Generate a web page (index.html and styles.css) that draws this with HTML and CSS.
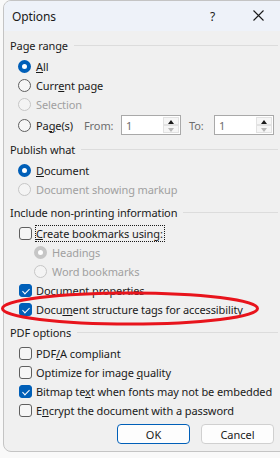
FILE: index.html
```html
<!DOCTYPE html>
<html lang="en">
<head>
    <meta charset="UTF-8">
    <title>Options</title>
    <link rel="stylesheet" href="styles.css">
</head>
<body>
    <div class="screen">
        <div class="window">
            <div class="titlebar">
                <span class="title">Options</span>
                <span class="help">?</span>
                <span class="close">
                    <svg width="11" height="11" viewBox="0 0 11 11"><path d="M0.5 0.5 L10.5 10.5 M10.5 0.5 L0.5 10.5" stroke="#1a1a1a" stroke-width="1.1" fill="none"/></svg>
                </span>
            </div>

            <div class="content">
                <div class="group">
                    <div class="group-label"><span>Page range</span></div>
                    <div class="row"><span class="radio on"></span><span><u>A</u>ll</span></div>
                    <div class="row"><span class="radio"></span><span>Curr<u>e</u>nt page</span></div>
                    <div class="row disabled"><span class="radio"></span><span>Selection</span></div>
                    <div class="row pages">
                        <span class="radio"></span><span class="pages-text">Pa<u>g</u>e(s)</span>
                        <span class="field-label from">From:</span>
                        <span class="spin"><span class="spin-value">1</span><span class="spin-btns"><span class="up"></span><span class="down"></span></span></span>
                        <span class="field-label to">To:</span>
                        <span class="spin"><span class="spin-value">1</span><span class="spin-btns"><span class="up"></span><span class="down"></span></span></span>
                    </div>
                </div>

                <div class="group">
                    <div class="group-label"><span>Publish what</span></div>
                    <div class="row"><span class="radio on"></span><span><u>D</u>ocument</span></div>
                    <div class="row disabled"><span class="radio"></span><span>Document showing markup</span></div>
                </div>

                <div class="group">
                    <div class="group-label"><span>Include non-printing information</span></div>
                    <div class="row"><span class="check"></span><span class="focus"><u>C</u>reate bookmarks using:</span></div>
                    <div class="row sub disabled"><span class="radio on"></span><span>Headings</span></div>
                    <div class="row sub disabled"><span class="radio"></span><span>Word bookmarks</span></div>
                    <div class="row"><span class="check on"></span><span>Document properties</span></div>
                    <div class="row"><span class="check on"></span><span>Docu<u>m</u>ent structure tags for accessibility</span></div>
                </div>

                <div class="group">
                    <div class="group-label"><span>PDF options</span></div>
                    <div class="row"><span class="check"></span><span>PDF<u>/</u>A compliant</span></div>
                    <div class="row"><span class="check"></span><span>Optimize for image <u>q</u>uality</span></div>
                    <div class="row"><span class="check on"></span><span>Bitmap te<u>x</u>t when fonts may not be embedded</span></div>
                    <div class="row"><span class="check"></span><span>E<u>n</u>crypt the document with a password</span></div>
                </div>

                <div class="buttons">
                    <button class="btn default">OK</button>
                    <button class="btn">Cancel</button>
                </div>
            </div>
        </div>

        <!-- red mark drawn over the dialog -->
        <svg class="mark" width="262" height="36" viewBox="0 0 262 36">
            <ellipse cx="130" cy="17.5" rx="127.5" ry="15.5" fill="none" stroke="#e8141c" stroke-width="3"/>
        </svg>
    </div>
</body>
</html>
```

FILE: styles.css
```css
body {
    margin: 0;
    padding: 0;
    background: #f9f9f9;
    font-family: "Segoe UI", "Noto Sans", sans-serif;
    font-size: 11px;
    letter-spacing: -0.1px;
    color: #1a1a1a;
}
.screen {
    position: relative;
    width: 280px;
    height: 458px;
    overflow: hidden;
}
.window {
    margin-left: 3px;
    width: 300px;
    height: 452px;
    background: #f0f0f0;
    border: 1px solid #c4c4c4;
    border-radius: 8px;
    overflow: hidden;
    box-sizing: border-box;
}
.titlebar {
    height: 30px;
    background: #eef2f9;
    display: flex;
    align-items: center;
    position: relative;
}
.title {
    margin-left: 8px;
    font-size: 12px;
}
.help {
    position: absolute;
    left: 206px;
    top: 7px;
    font-size: 12px;
}
.close {
    position: absolute;
    left: 249px;
    top: 9px;
    line-height: 0;
}
.content {
    padding: 5px 0 0 6px;
}
.group {
    margin-bottom: 4px;
}
.group-label {
    height: 19px;
    display: flex;
    align-items: center;
    margin-bottom: 2px;
}
.group-label span {
    white-space: nowrap;
}
.group-label::after {
    content: "";
    flex: 1;
    height: 1px;
    background: #dcdcdc;
    margin-left: 6px;
    margin-right: 24px;
}
.row {
    height: 19px;
    display: flex;
    align-items: center;
    white-space: nowrap;
    padding-left: 8px;
}
.row.sub {
    padding-left: 24px;
}
.row.disabled {
    color: #a0a0a0;
}
.radio {
    width: 13px;
    height: 13px;
    box-sizing: border-box;
    border: 1px solid #5f5f5f;
    border-radius: 50%;
    background: #f6f6f6;
    margin-right: 5px;
    flex: none;
}
.radio.on {
    border: 4px solid #005fb8;
    background: #ffffff;
}
.disabled .radio {
    border-color: #c6c6c6;
    background: #f4f4f4;
}
.disabled .radio.on {
    border: 4px solid #c6c6c6;
    background: #ffffff;
}
.check {
    width: 13px;
    height: 13px;
    box-sizing: border-box;
    border: 1px solid #5f5f5f;
    border-radius: 3px;
    background: #f6f6f6;
    margin-left: 1px;
    margin-right: 4px;
    flex: none;
    position: relative;
}
.check.on {
    border-color: #005fb8;
    background: #005fb8;
}
.check.on::after {
    content: "";
    position: absolute;
    left: 3.5px;
    top: 1.5px;
    width: 3px;
    height: 6px;
    border: solid #ffffff;
    border-width: 0 1px 1px 0;
    transform: rotate(45deg);
}
.focus {
    outline: 1px dotted #1a1a1a;
    outline-offset: 0;
    line-height: 15px;
    padding-right: 1px;
}
.pages {
    height: 22px;
    margin-bottom: 1px;
}
.pages-text {
    width: 48px;
}
.field-label {
    color: #6d6d6d;
}
.from {
    width: 37px;
}
.to {
    margin-left: 8px;
    width: 25px;
}
.spin {
    width: 60px;
    height: 20px;
    box-sizing: border-box;
    border: 1px solid #a9a9a9;
    background: #ffffff;
    display: flex;
    justify-content: space-between;
    flex: none;
}
.spin-value {
    color: #6d6d6d;
    padding: 2px 0 0 4px;
    line-height: 16px;
}
.spin-btns {
    width: 16px;
    display: flex;
    flex-direction: column;
    margin: 1px 1px 1px 0;
}
.spin-btns span {
    flex: 1;
    border: 1px solid #e2e2e2;
    background: #f6f6f6;
    position: relative;
}
.spin-btns .up::after,
.spin-btns .down::after {
    content: "";
    position: absolute;
    left: 4px;
    top: 2px;
    border-left: 3.5px solid transparent;
    border-right: 3.5px solid transparent;
}
.spin-btns .up::after {
    border-bottom: 4px solid #1a1a1a;
}
.spin-btns .down::after {
    border-top: 4px solid #b8b8b8;
}
.buttons {
    display: flex;
    gap: 11px;
    padding-left: 107px;
    margin-top: 3px;
}
.btn {
    width: 73px;
    height: 20px;
    font-family: "Segoe UI", "Noto Sans", sans-serif;
    font-size: 11px;
    color: #1a1a1a;
    background: #fdfdfd;
    border: 1px solid #d0d0d0;
    border-radius: 4px;
    padding: 0;
}
.btn.default {
    border-color: #005fb8;
}
.mark {
    position: absolute;
    left: 0;
    top: 291px;
}
```
